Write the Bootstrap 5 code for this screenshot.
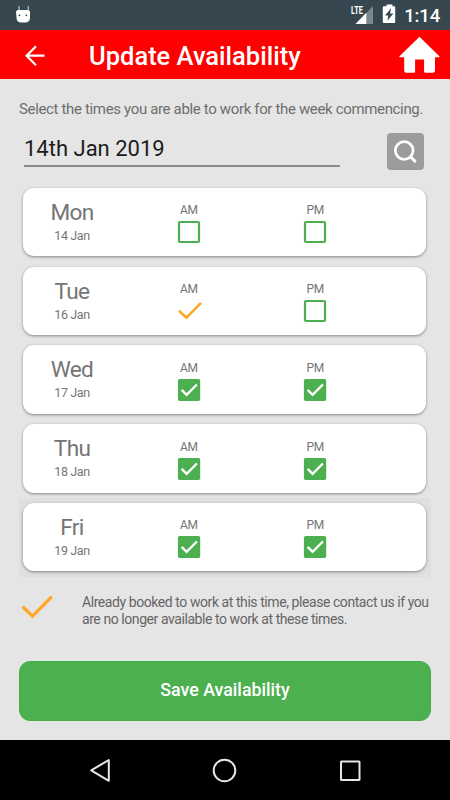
<!DOCTYPE html>
<html lang="en">
<head>
<meta charset="utf-8">
<meta name="viewport" content="width=device-width, initial-scale=1">
<title>Update Availability</title>
<link href="https://cdn.jsdelivr.net/npm/bootstrap@5.3.0/dist/css/bootstrap.min.css" rel="stylesheet">
<style>
body { font-family: Roboto, sans-serif; background: #e5e5e5; color: #757575; width: 450px; height: 800px; overflow: hidden; }
svg { display: block; flex: none; }
.status-bar { height: 30px; background: #37474f; padding: 0 10px 0 15px; }
.clock { font-size: 18.5px; font-weight: 500; line-height: 30px; padding-top: 1px; letter-spacing: -.15px; }
.app-bar { height: 49px; background: #f00; padding: 0 10px 0 25px; }
.app-title { font-size: 25.5px; font-weight: 500; line-height: 50px; margin-left: 44px; padding-top: 3px; }
.content-area { height: 661px; padding: 0 19px; }
.intro { font-size: 15px; line-height: 20px; padding-top: 20px; white-space: nowrap; color: #6e6e6e; letter-spacing: -.345px; }
.date-row { height: 64px; padding: 14px 7px 0 5px; }
.date-field { width: 316px; height: 34px; border: 0; border-bottom: 2px solid #8c8c8c; border-radius: 0; background: transparent; padding: 0 0 1px; font-size: 22px; line-height: 30px; color: #1c1c1c; }
.btn-search { width: 37px; height: 37px; background: #9c9c9c; border-radius: 4px; }
.slot { height: 78.75px; padding: 4.8px 5px 5.2px 4px; }
.slot-active { background: #dfdfdf; }
.day-card { height: 68.6px; border: 0; border-radius: 11px; box-shadow: 0 1px 3px rgba(0,0,0,.42); padding-right: 47.5px; }
.day-cell { width: 98px; margin-right: 4.5px; }
.day-name { font-size: 22.6px; line-height: 26px; padding-top: 12px; letter-spacing: -.7px; }
.day-date { font-size: 12.5px; line-height: 16px; padding-top: 2px; letter-spacing: -.4px; }
.shift { font-size: 12px; line-height: 14px; padding-top: 15.5px; letter-spacing: -.3px; }
.shift svg { margin-top: 3px; }
.legend { padding: 17px 0 0 2px; height: 84px; }
.legend p { font-size: 14px; line-height: 17px; color: #666; white-space: nowrap; margin-left: 30px; letter-spacing: -.43px; }
.btn-save { height: 60px; border-radius: 11px; background: #4caf50; border: 1px solid #43ad48; font-size: 17.8px; font-weight: 500; color: #fff; }
.nav-keys { height: 60px; background: #000; padding: 0 89px; }
</style>
<script src="https://cdn.jsdelivr.net/npm/bootstrap@5.3.0/dist/js/bootstrap.bundle.min.js"></script>
</head>
<body>
<svg width="0" height="0" class="position-absolute">
  <symbol id="box-empty" viewBox="0 0 26 24"><rect x="3" y="2" width="20" height="20" rx="1" fill="none" stroke="#4caf50" stroke-width="2.2"/></symbol>
  <symbol id="box-checked" viewBox="0 0 26 24"><rect x="1.9" y="1" width="22.3" height="22" rx="1.8" fill="#4caf50"/><path d="M5.600 11.900l5 5L20.900 6.500" fill="none" stroke="#fff" stroke-width="2.4"/></symbol>
  <symbol id="tick" viewBox="0 0 26 24"><path d="M3 11.800l7.400 6.900L25 3.900" fill="none" stroke="#ffa726" stroke-width="2.600" stroke-linecap="butt"/></symbol>
</svg>

<div class="status-bar d-flex align-items-center justify-content-between text-white">
  <svg width="16" height="20" viewBox="0 0 16 20"><path d="M4 1v5M13.300 1v5" stroke="#aeb6ba" stroke-width="1.300"/><path d="M1 7Q1 5 4 5h8q3 0 3 2.300v5.200q0 5-5 5H6.500q-5 0-5-5z" fill="#fff"/><circle cx="4.500" cy="10.300" r=".9" fill="#37474f"/><circle cx="11.400" cy="10.300" r=".9" fill="#37474f"/></svg>
  <div class="d-flex align-items-center">
    <svg width="54" height="24" viewBox="0 0 54 24">
      <text x="1" y="11.300" font-family="Roboto, sans-serif" font-size="10" font-weight="700" fill="#fff" textLength="12" lengthAdjust="spacingAndGlyphs">LTE</text>
      <path d="M23 3v18H5.500z" fill="#fff" fill-opacity=".35"/><path d="M16.300 9.800V21H5.500z" fill="#fff"/>
      <path d="M36.500 3.300V2q0-.6.600-.6h4.800q.6 0 .6.600v1.300h1.700q1 0 1 1v14.700q0 1-1 1H33.800q-1 0-1-1V4.300q0-1 1-1z" fill="#fff"/><path d="M41 5.300l-6 7.200h3.300l-.9 5.200 6-7.200h-3.300z" fill="#37474f"/>
    </svg>
    <span class="clock">1:14</span>
  </div>
</div>

<header class="app-bar d-flex align-items-center text-white">
  <svg width="20" height="22" viewBox="0 0 20 22"><path d="M19.500 11.700H1.500M11 2.200L1.600 11.700 11 21.200" fill="none" stroke="#fff" stroke-width="2.200"/></svg>
  <h1 class="app-title mb-0">Update Availability</h1>
  <svg class="ms-auto" width="41" height="38" viewBox="0 0 41 38"><path d="M20.500.8L40.600 20.500q.4.700-.6.700h-4v13.500q0 2-2 2h-7.600q-1.300 0-1.300-1.300V23.500h-9v12q0 1.200-1.200 1.200H7.200q-2 0-2-2V21.200H1q-1.200 0-.5-.9z" fill="#fff"/></svg>
</header>

<main class="content-area">
  <p class="intro mb-0">Select the times you are able to work for the week commencing.</p>
  <div class="date-row d-flex justify-content-between">
    <input class="date-field form-control" type="text" value="14th Jan 2019" aria-label="Week commencing">
    <button class="btn btn-search p-0 border-0" type="button" aria-label="Search">
      <svg width="37" height="37" viewBox="0 0 37 37"><circle cx="17.200" cy="17.500" r="8.900" fill="none" stroke="#fff" stroke-width="2.700"/><path d="M23.600 23.900l4.300 4.200" stroke="#fff" stroke-width="3" stroke-linecap="round"/></svg>
    </button>
  </div>

  <div class="slot"><div class="day-card card flex-row text-center">
    <div class="day-cell"><div class="day-name">Mon</div><div class="day-date">14 Jan</div></div>
    <div class="shift col">AM<svg class="mx-auto" width="26" height="24"><use href="#box-empty"/></svg></div>
    <div class="shift col">PM<svg class="mx-auto" width="26" height="24"><use href="#box-empty"/></svg></div>
  </div></div>
  <div class="slot"><div class="day-card card flex-row text-center">
    <div class="day-cell"><div class="day-name">Tue</div><div class="day-date">16 Jan</div></div>
    <div class="shift col">AM<svg class="mx-auto" width="26" height="24"><use href="#tick"/></svg></div>
    <div class="shift col">PM<svg class="mx-auto" width="26" height="24"><use href="#box-empty"/></svg></div>
  </div></div>
  <div class="slot"><div class="day-card card flex-row text-center">
    <div class="day-cell"><div class="day-name">Wed</div><div class="day-date">17 Jan</div></div>
    <div class="shift col">AM<svg class="mx-auto" width="26" height="24"><use href="#box-checked"/></svg></div>
    <div class="shift col">PM<svg class="mx-auto" width="26" height="24"><use href="#box-checked"/></svg></div>
  </div></div>
  <div class="slot"><div class="day-card card flex-row text-center">
    <div class="day-cell"><div class="day-name">Thu</div><div class="day-date">18 Jan</div></div>
    <div class="shift col">AM<svg class="mx-auto" width="26" height="24"><use href="#box-checked"/></svg></div>
    <div class="shift col">PM<svg class="mx-auto" width="26" height="24"><use href="#box-checked"/></svg></div>
  </div></div>
  <div class="slot slot-active"><div class="day-card card flex-row text-center">
    <div class="day-cell"><div class="day-name">Fri</div><div class="day-date">19 Jan</div></div>
    <div class="shift col">AM<svg class="mx-auto" width="26" height="24"><use href="#box-checked"/></svg></div>
    <div class="shift col">PM<svg class="mx-auto" width="26" height="24"><use href="#box-checked"/></svg></div>
  </div></div>

  <div class="legend d-flex align-items-start">
    <svg width="31" height="26" viewBox="0 0 31 26"><path d="M2.500 13.500l9 8.700L30 3.500" fill="none" stroke="#ffa726" stroke-width="3.200" stroke-linecap="round"/></svg>
    <p class="mb-0">Already booked to work at this time, please contact us if you<br>are no longer available to work at these times.</p>
  </div>
  <button class="btn btn-save w-100 p-0" type="button">Save Availability</button>
</main>

<nav class="nav-keys d-flex align-items-center justify-content-between" aria-label="System">
  <svg width="22" height="26" viewBox="0 0 22 26"><path d="M2.200 13.300L19.800 3v20.800z" fill="none" stroke="#e6e6e6" stroke-width="2" stroke-linejoin="round"/></svg>
  <svg width="26" height="26" viewBox="0 0 26 26"><circle cx="12.500" cy="13.500" r="10.800" fill="none" stroke="#e6e6e6" stroke-width="2"/></svg>
  <svg width="22" height="26" viewBox="0 0 22 26"><rect x="2" y="4.500" width="18.500" height="18.500" rx=".5" fill="none" stroke="#e6e6e6" stroke-width="2"/></svg>
</nav>
</body>
</html>
